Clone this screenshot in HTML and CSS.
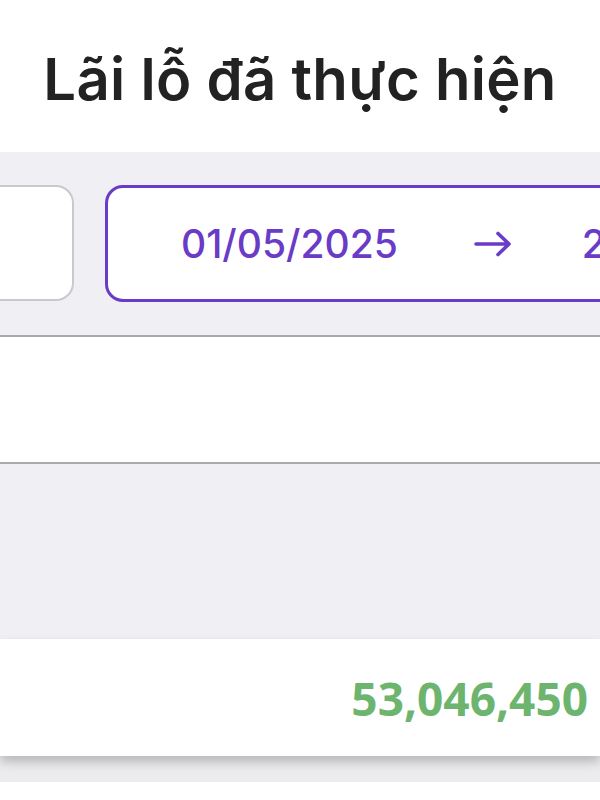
FILE: index.html
```html
<!DOCTYPE html>
<html lang="vi">
<head>
    <meta charset="UTF-8">
    <title>Lãi lỗ đã thực hiện</title>
    <link rel="stylesheet" href="styles.css">
</head>
<body>
    <header class="page-header"><h1>Lãi lỗ đã thực hiện</h1></header>
    <div class="filter-bar">
        <div class="filter-row">
            <div class="filter-box"></div>
            <div class="date-range">
                <span class="date">01/05/2025</span>
                <svg class="arrow" width="38" height="26" viewBox="0 0 38 26">
                    <path d="M2 13 H35 M24 2.5 L35 13 L24 23.5" fill="none" stroke="#6a3bc6" stroke-width="3.6" stroke-linecap="round" stroke-linejoin="round"/>
                </svg>
                <span class="date">26/05/2025</span>
            </div>
        </div>
    </div>
    <div class="blank-section"></div>
    <div class="gap-section"></div>
    <div class="summary-card">
        <span class="amount">53,046,450</span>
    </div>
    <div class="bottom-gap"></div>
    <div class="bottom-white"></div>
</body>
</html>
```

FILE: styles.css
```css
body {
    margin: 0;
    padding: 0;
    font-family: Inter, "Noto Sans", sans-serif;
    background-color: #ffffff;
    overflow: hidden;
}
.page-header {
    height: 152px;
    display: flex;
    align-items: center;
    justify-content: center;
    padding-top: 6px;
    box-sizing: border-box;
}
.page-header h1 {
    margin: 0;
    font-size: 58px;
    font-weight: 600;
    color: #222222;
    letter-spacing: 0.3px;
}
.filter-bar {
    background-color: #f0f0f4;
    height: 183px;
    border-bottom: 2px solid #a9a9ab;
    display: flex;
    align-items: center;
    overflow: hidden;
}
.filter-row {
    display: flex;
    gap: 31px;
    margin-left: -128px; /* row is scrolled sideways */
}
.filter-box {
    flex-shrink: 0;
    width: 198px;
    height: 112px;
    background-color: #ffffff;
    border: 2px solid #c9c9cd;
    border-radius: 18px;
}
.date-range {
    flex-shrink: 0;
    width: 560px;
    height: 111px;
    background-color: #ffffff;
    border: 3px solid #6a3bc6;
    border-radius: 18px;
    display: flex;
    align-items: center;
    padding-left: 73px;
}
.date {
    flex-shrink: 0;
    font-size: 39px;
    font-weight: 500;
    color: #6a3bc6;
    white-space: nowrap;
}
.arrow {
    flex-shrink: 0;
    margin: 0 70px 0 76px;
}
.blank-section {
    height: 125px;
    background-color: #ffffff;
    border-bottom: 2px solid #a9a9ab;
}
.gap-section {
    height: 175px;
    background-color: #f0f0f4;
}
.summary-card {
    position: relative;
    height: 117px;
    background-color: #ffffff;
    display: flex;
    align-items: center;
    justify-content: flex-end;
    padding-right: 12px;
    box-shadow: 0 6px 10px rgba(0, 0, 0, 0.22);
}
.amount {
    font-family: "Open Sans", sans-serif;
    font-size: 46px;
    font-weight: 700;
    color: #6db56f;
}
.bottom-gap {
    height: 26px;
    background-color: #ececef;
}
.bottom-white {
    height: 40px;
    background-color: #ffffff;
}
```
